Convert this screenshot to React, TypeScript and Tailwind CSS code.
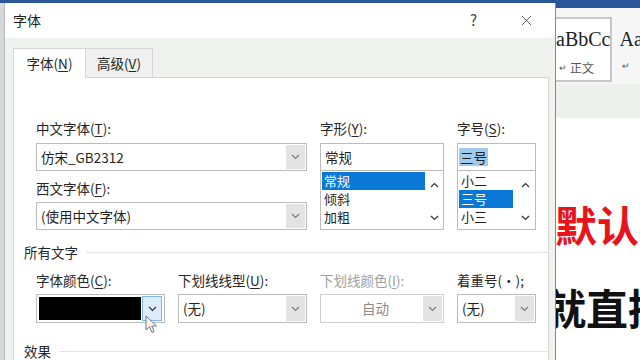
import { X } from "lucide-react"

const font = "font-['Noto_Sans_CJK_SC','Noto_Sans',sans-serif]"

const Chevron = ({ up = false, dark = false }: { up?: boolean; dark?: boolean }) => (
  <svg width="9" height="6" viewBox="0 0 9 6" className="block">
    <path
      d={up ? "M1 5 L4.5 1.5 L8 5" : "M1 1 L4.5 4.5 L8 1"}
      fill="none"
      stroke={dark ? "#333" : "#7a7a7a"}
      strokeWidth="1.2"
    />
  </svg>
)

const Label = ({ text, keyChar, tail = "):", gray = false }: { text: string; keyChar: string; tail?: string; gray?: boolean }) => (
  <div className={`h-[20px] leading-[20px] text-[13.5px] whitespace-nowrap ${gray ? "text-[#a0a0a0]" : "text-[#262626]"}`}>
    {text}(<u className="underline-offset-2">{keyChar}</u>{tail}
  </div>
)

const Combo = ({ value, disabled = false, h = "h-[28px]" }: { value: string; disabled?: boolean; h?: string }) => (
  <div className={`flex ${h} border ${disabled ? "border-[#d0d0d0]" : "border-[#bcbcbc]"} bg-white`}>
    <div className={`flex-1 flex items-center text-[13.5px] ${disabled ? "justify-center text-[#8c8c8c] pl-[8px]" : "pl-[4px] text-[#1f1f1f]"}`}>
      {value}
    </div>
    <div className="m-px w-[19px] bg-[#e3e3e3] flex items-center justify-center">
      <Chevron />
    </div>
  </div>
)

const ListBox = ({ items, selected, selW }: { items: string[]; selected: number; selW: string }) => (
  <div className="-mt-px h-[60px] border border-[#bcbcbc] bg-white flex">
    <div className="flex-1 pt-px pl-px">
      {items.map((it, i) => (
        <div
          key={it}
          className={`h-[18px] leading-[18px] text-[13px] pl-[2px] overflow-hidden ${selW} ${i === selected ? "bg-[#0a78d7] text-white" : "text-[#1f1f1f]"}`}
        >
          {it}
        </div>
      ))}
    </div>
    <div className="w-[19px] flex flex-col justify-between items-center pt-[11px] pb-[8px]">
      <Chevron up dark />
      <Chevron dark />
    </div>
  </div>
)

export default function App() {
  return (
    <div className={`w-[640px] h-[360px] overflow-hidden flex flex-col bg-[#d9dcdd] ${font}`}>
      <div className="h-[3px] bg-[#2b579a] shrink-0" />
      <div className="flex flex-1 min-h-0">
        <div className="w-[4px] bg-[#d6d9db]" />

        {/* dialog */}
        <div className="w-[552px] border-l border-r border-l-[#b8bbbd] border-r-[#8a8a8a] flex flex-col">
          <div className="h-[35px] bg-white flex items-center shrink-0">
            <span className="pl-[8px] text-[14px] text-[#1f1f1f]">字体</span>
            <span className="ml-auto mr-[41px] text-[15px] text-[#444]">?</span>
            <X size={17} strokeWidth={1.1} className="mr-[20px] text-[#333]" />
          </div>

          <div className="flex-1 bg-[#eff2ee] pt-[10px] pl-[8px] pr-[6px] flex flex-col">
            <div className="flex items-end text-[13.5px] text-[#262626]">
              <div className="relative z-10 -mb-px h-[30px] w-[73px] bg-white border-t border-l border-r border-[#d6d6d6] flex items-center justify-center">
                字体(<u className="underline-offset-2">N</u>)
              </div>
              <div className="h-[29px] w-[67px] bg-[#f0f0f0] border-t border-r border-[#d6d6d6] flex items-center justify-center">
                高级(<u className="underline-offset-2">V</u>)
              </div>
            </div>

            <div className="flex-1 bg-white border border-[#d6d6d6] pt-[40px] pl-[10px]">
              <div className="flex gap-[13px] pl-[12px]">
                <div className="w-[271px]">
                  <Label text="中文字体" keyChar="T" />
                  <div className="mt-[5px]">
                    <Combo value="仿宋_GB2312" h="h-[28px]" />
                  </div>
                  <div className="mt-[7px]">
                    <Label text="西文字体" keyChar="F" />
                  </div>
                  <div className="mt-[4px]">
                    <Combo value="(使用中文字体)" />
                  </div>
                </div>

                <div className="w-[124px]">
                  <Label text="字形" keyChar="Y" />
                  <div className="mt-[5px] h-[28px] border border-[#bcbcbc] bg-white pl-[4px] flex items-center text-[13.5px] text-[#1f1f1f]">
                    常规
                  </div>
                  <ListBox items={["常规", "倾斜", "加粗"]} selected={0} selW="w-[103px]" />
                </div>

                <div className="w-[79px]">
                  <Label text="字号" keyChar="S" />
                  <div className="mt-[5px] h-[28px] border border-[#bcbcbc] bg-white pl-[1px] flex items-center text-[13.5px] text-[#1f1f1f]">
                    <span className="bg-[#9fcbef] px-px leading-[18px]">三号</span>
                  </div>
                  <ListBox items={["小二", "三号", "小三"]} selected={1} selW="w-[54px]" />
                </div>
              </div>

              <div className="mt-[12px] h-[20px] flex items-center text-[13.5px] text-[#262626]">
                <span>所有文字</span>
                <div className="flex-1 h-px bg-[#e6e6e6] ml-[8px]" />
              </div>

              <div className="mt-[8px] flex gap-[13px] pl-[12px]">
                <div className="w-[129px]">
                  <Label text="字体颜色" keyChar="C" />
                  <div className="relative mt-[4px] h-[29px] border border-[#bcbcbc] bg-white flex p-[2px] gap-px">
                    <div className="flex-1 bg-black" />
                    <div className="w-[20px] -my-px bg-[#dcecfb] border border-[#7db6e8] flex items-center justify-center">
                      <Chevron dark />
                    </div>
                    <svg width="13" height="19" viewBox="0 0 13 19" className="absolute left-[108px] top-[20px]">
                      <path d="M1 1 L1 15 L4.5 11.8 L7 17.5 L9.2 16.6 L6.8 11 L11.5 11 Z" fill="#f4f4f4" stroke="#777" strokeWidth="1" />
                    </svg>
                  </div>
                </div>
                <div className="w-[129px]">
                  <Label text="下划线线型" keyChar="U" />
                  <div className="mt-[4px]">
                    <Combo value="(无)" h="h-[29px]" />
                  </div>
                </div>
                <div className="w-[124px]">
                  <Label text="下划线颜色" keyChar="I" gray />
                  <div className="mt-[4px]">
                    <Combo value="自动" disabled h="h-[29px]" />
                  </div>
                </div>
                <div className="w-[79px]">
                  <div className="h-[20px] leading-[20px] text-[13.5px] text-[#262626] whitespace-nowrap">着重号(·);</div>
                  <div className="mt-[4px]">
                    <Combo value="(无)" h="h-[29px]" />
                  </div>
                </div>
              </div>

              <div className="mt-[18px] h-[20px] flex items-center text-[13.5px] text-[#262626]">
                <span>效果</span>
                <div className="flex-1 h-px bg-[#e6e6e6] ml-[8px]" />
              </div>
            </div>
          </div>
        </div>

        {/* word document behind */}
        <div className="flex-1 flex flex-col overflow-hidden">
          <div className="h-[5px] bg-[#2b579a] shrink-0" />
          <div className="h-[76px] bg-[#f6f6f6] shrink-0 pt-[9px] flex items-start">
            <div className="w-[61px] h-[65px] bg-white border-t-2 border-r-2 border-b-2 border-[#c6c6c6] flex flex-col items-start">
              <div className="mt-[8px] text-[20px] leading-[24px] font-['Liberation_Serif',serif] text-[#222] whitespace-nowrap">aBbCc</div>
              <div className="mt-[8px] pl-[3px] text-[12px] text-[#555] flex items-center gap-[3px]">
                <span className="text-[9px]">↵</span>正文
              </div>
            </div>
            <div className="ml-[7px] flex flex-col">
              <div className="mt-[10px] text-[20px] leading-[24px] font-['Liberation_Serif',serif] text-[#222] whitespace-nowrap">Aa</div>
              <div className="mt-[8px] pl-[3px] text-[9px] text-[#555]">↵</div>
            </div>
          </div>
          <div className="h-[34px] bg-[#edf0ed] shrink-0" />
          <div className="flex-1 bg-white">
            <div className="mt-[85px] -ml-px text-[42px] leading-none font-bold text-[#e8141b] whitespace-nowrap">默认</div>
            <div className="mt-[41px] -ml-[12px] text-[42px] leading-none font-bold text-[#111] whitespace-nowrap">就直接</div>
          </div>
        </div>
      </div>
    </div>
  )
}
